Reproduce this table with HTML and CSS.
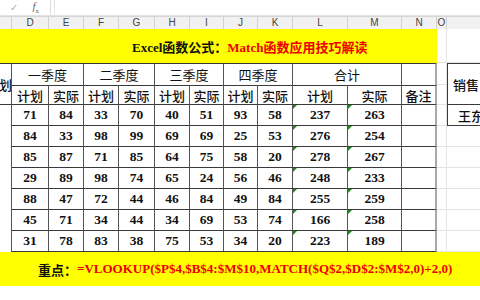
FILE: index.html
```html
<!DOCTYPE html>
<html lang="zh">
<head>
<meta charset="utf-8">
<link rel="stylesheet" href="styles.css">
</head>
<body>
<div class="app">
  <div class="fbar">
    <div class="fbtns"><span class="check">✓</span><span class="fx"><i>f</i><sub>x</sub></span></div>
    <div class="finput"></div>
  </div>
  <div class="strip"></div>
  <div class="colheads">
    <div class="ch"></div><div class="ch">D</div><div class="ch">E</div><div class="ch">F</div><div class="ch">G</div><div class="ch">H</div><div class="ch">I</div><div class="ch">J</div><div class="ch">K</div><div class="ch">L</div><div class="ch">M</div><div class="ch">N</div><div class="ch">O</div><div class="ch">P</div>
  </div>
  <div class="sheet">
    <div class="title"><b class="blk">Excel函数公式：</b><b class="red">Match函数应用技巧解读</b></div>
    <div class="gl r1 c13"></div><div class="gl r1 c14"></div>

    <div class="th cC"><span class="clip">计划</span></div>
    <div class="th q1">一季度</div>
    <div class="th q2">二季度</div>
    <div class="th q3">三季度</div>
    <div class="th q4">四季度</div>
    <div class="th qs">合计</div>
    <div class="th cN1"></div>
    <div class="gl c13 r2"></div><div class="gl c13 r3"></div>
    <div class="side sh">销售员</div>

    <div class="th s">计划</div><div class="th s">实际</div>
    <div class="th s">计划</div><div class="th s">实际</div>
    <div class="th s">计划</div><div class="th s">实际</div>
    <div class="th s">计划</div><div class="th s">实际</div>
    <div class="th s">计划</div><div class="th s">实际</div>
    <div class="th s nb">备注</div>

    <div class="row"><div class="cc"></div><div class="td">71</div><div class="td">84</div><div class="td">33</div><div class="td">70</div><div class="td">40</div><div class="td">51</div><div class="td">93</div><div class="td">58</div><div class="td tx">237</div><div class="td tx">263</div><div class="td"></div><div class="gl"></div><div class="side sd">王东</div></div>
    <div class="row"><div class="cc"></div><div class="td">84</div><div class="td">33</div><div class="td">98</div><div class="td">99</div><div class="td">69</div><div class="td">69</div><div class="td">25</div><div class="td">53</div><div class="td tx">276</div><div class="td tx">254</div><div class="td"></div><div class="gl"></div><div class="gl"></div></div>
    <div class="row"><div class="cc"></div><div class="td">85</div><div class="td">87</div><div class="td">71</div><div class="td">85</div><div class="td">64</div><div class="td">75</div><div class="td">58</div><div class="td">20</div><div class="td tx">278</div><div class="td tx">267</div><div class="td"></div><div class="gl"></div><div class="gl"></div></div>
    <div class="row"><div class="cc"></div><div class="td">29</div><div class="td">89</div><div class="td">98</div><div class="td">74</div><div class="td">65</div><div class="td">24</div><div class="td">56</div><div class="td">46</div><div class="td tx">248</div><div class="td tx">233</div><div class="td"></div><div class="gl"></div><div class="gl"></div></div>
    <div class="row"><div class="cc"></div><div class="td">88</div><div class="td">47</div><div class="td">72</div><div class="td">44</div><div class="td">46</div><div class="td">84</div><div class="td">49</div><div class="td">84</div><div class="td tx">255</div><div class="td tx">259</div><div class="td"></div><div class="gl"></div><div class="gl"></div></div>
    <div class="row"><div class="cc"></div><div class="td">45</div><div class="td">71</div><div class="td">34</div><div class="td">44</div><div class="td">34</div><div class="td">69</div><div class="td">53</div><div class="td">74</div><div class="td tx">166</div><div class="td tx">258</div><div class="td"></div><div class="gl"></div><div class="gl"></div></div>
    <div class="row"><div class="cc"></div><div class="td">31</div><div class="td">78</div><div class="td">83</div><div class="td">38</div><div class="td">75</div><div class="td">53</div><div class="td">34</div><div class="td">20</div><div class="td tx">223</div><div class="td tx">189</div><div class="td"></div><div class="gl"></div><div class="gl"></div></div>

    <div class="note"><b class="blk">重点：</b><b class="red">=VLOOKUP($P$4,$B$4:$M$10,MATCH($Q$2,$D$2:$M$2,0)+2,0)</b></div>
    <div class="tail"></div>
  </div>
</div>
</body>
</html>
```

FILE: styles.css
```css
* { box-sizing: border-box; }
html, body { margin: 0; padding: 0; background: #fff; }
body { width: 480px; height: 300px; overflow: hidden; }
.app { width: 480px; height: 300px; overflow: hidden; display: flex; flex-direction: column; }

.fbar { height: 19px; display: flex; background: #fff; border-bottom: 1px solid #e2e2e2; }
.fbtns { width: 51px; display: flex; align-items: center; border-right: 1px solid #dcdcdc; font-family: "DejaVu Sans", sans-serif; }
.check { margin-left: 10px; font-size: 10px; color: #b0b0b0; }
.fx { margin-left: 14px; font-family: "Liberation Serif", serif; font-size: 11px; color: #666; }
.fx sub { font-size: 7px; }
.finput { flex: 1; margin-left: 3px; border-left: 1px solid #e4e4e4; background: #fff; }

.strip { height: 8px; background: #e9e9e9; border-bottom: 1px solid #d6d6d6; }

.colheads { height: 12px; display: grid; grid-template-columns: 12px 37px 35px 35px 36px 35px 34px 34px 35px 55px 54px 35px 10px 80px; background: #f1f1f1; }
.ch { border-right: 1px solid #d2d2d2; font-family: "Liberation Sans", sans-serif; font-size: 10px; line-height: 12px; color: #444; text-align: center; }

.sheet {
  display: grid;
  grid-template-columns: 12px 37px 35px 35px 36px 35px 34px 34px 35px 55px 54px 35px 10px 80px;
  grid-template-rows: 34px 22px 20px repeat(7, 21px) 34px 20px;
  font-family: "Liberation Serif", "Noto Sans CJK SC", serif;
  font-size: 13px;
  color: #111;
}
.title { grid-column: 1 / 13; grid-row: 1; background: #ffff00; display: flex; align-items: center; padding-left: 132px; white-space: nowrap; font-size: 13px; }
.blk { color: #111; }
.red { color: #ee0000; }
.r1 { grid-row: 1; } .r2 { grid-row: 2; } .r3 { grid-row: 3; }
.c13 { grid-column: 13; } .c14 { grid-column: 14; }
.gl { border-right: 1px solid #e4e4e4; border-bottom: 1px solid #e4e4e4; }

.th { display: flex; align-items: center; justify-content: center; border-top: 1px solid #3a3a3a; border-right: 1px solid #555; font-weight: 400; white-space: nowrap; }
.cC { grid-column: 1; grid-row: 2 / 4; justify-content: flex-end; overflow: hidden; border-bottom: 1px solid #3a3a3a; font-weight: 500; }
.clip { display: block; flex: none; margin-right: -1px; }
.q1 { grid-column: 2 / 4; grid-row: 2; }
.q2 { grid-column: 4 / 6; grid-row: 2; }
.q3 { grid-column: 6 / 8; grid-row: 2; }
.q4 { grid-column: 8 / 10; grid-row: 2; }
.qs { grid-column: 10 / 12; grid-row: 2; }
.cN1 { grid-column: 12; grid-row: 2; border-right: 2px solid #a8a8a8; }
.s { grid-row: 3; border-bottom: 1px solid #3a3a3a; font-weight: 500; }
.nb { border-right: 2px solid #a8a8a8; }

.side { display: flex; align-items: center; border-left: 1px solid #3a3a3a; border-top: 1px solid #3a3a3a; border-bottom: 1px solid #3a3a3a; white-space: nowrap; font-weight: 500; }
.sh { grid-column: 14; grid-row: 2 / 4; padding-left: 5px; }
.sd { grid-column: 14; grid-row: 4; border-top: none; padding-left: 10px; }

.row { display: contents; }
.cc { border-right: 1px solid #555; }
.td { position: relative; display: flex; align-items: center; justify-content: center; border-right: 1px solid #555; border-bottom: 1px solid #3a3a3a; font-weight: 700; font-size: 13.5px; }
.row .td:nth-child(12) { border-right: 2px solid #a8a8a8; }
.tx::before { content: ""; position: absolute; left: 0; top: 0; border-top: 4px solid #1a8a1a; border-right: 4px solid transparent; }

.note { grid-column: 1 / -1; background: #ffff00; display: flex; align-items: center; padding-left: 38px; white-space: nowrap; font-size: 13px; }
.tail { grid-column: 1 / -1; }
```
